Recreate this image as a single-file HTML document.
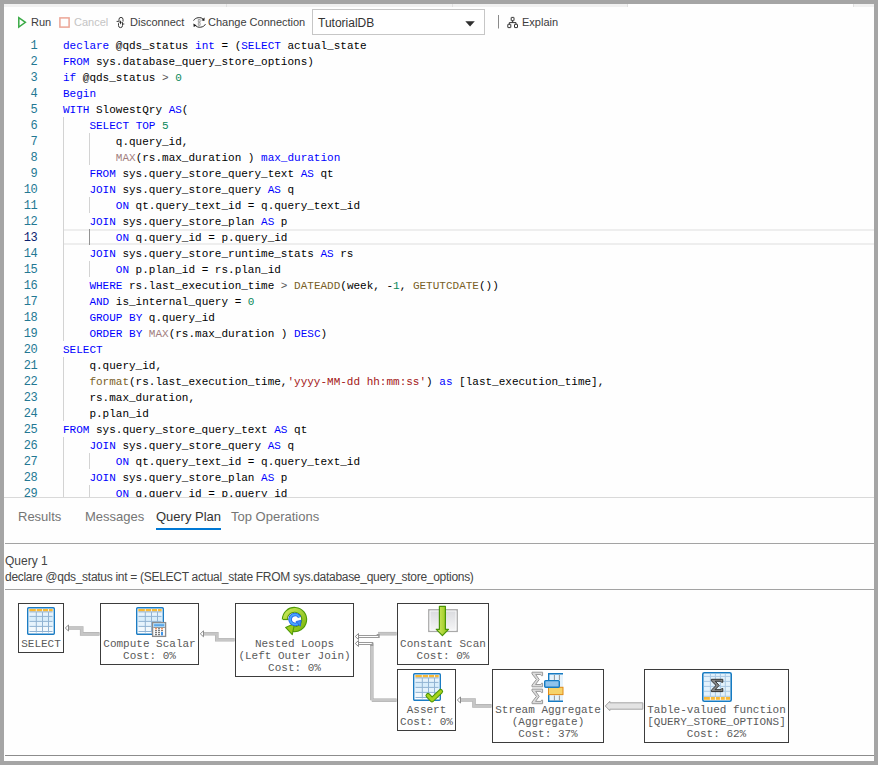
<!DOCTYPE html>
<html><head><meta charset="utf-8">
<style>
*{margin:0;padding:0;box-sizing:border-box}
html,body{width:878px;height:765px;overflow:hidden;background:#a5a5a5}
body{position:relative;font-family:"Liberation Sans",sans-serif}
#win{position:absolute;left:4px;top:4px;width:870px;height:757px;background:#fefefe}
.abs{position:absolute;white-space:pre}
.tb{position:absolute;white-space:pre;font-size:11px;color:#3c3c3c;line-height:14px;top:15px}
.ln{position:absolute;left:0;width:37px;text-align:right;color:#237893;font-family:"Liberation Mono",monospace;font-size:12px;letter-spacing:-0.6px;line-height:16px;padding-top:1px}
.ln.cur{color:#0b216f}
.cl{position:absolute;left:63px;white-space:pre;font-family:"Liberation Mono",monospace;font-size:11px;line-height:16px;color:#000;padding-top:1px}
.k{color:#0000ff}.f{color:#795e26}.m{color:#a27f80}.s{color:#a31515}.n{color:#09885a}.o{color:#555}
.g{position:absolute;width:1px;background:#d3d3d3}
.tab{position:absolute;top:509px;font-size:13px;line-height:16px;color:#757575;white-space:pre}
.hl{position:absolute;height:1px}
.node{position:absolute;border:1px solid #3c3c3c;background:#fff}
.nt{position:absolute;left:0;right:0;text-align:center;font-family:"Liberation Mono",monospace;font-size:11px;line-height:12px;color:#5a5a5a;white-space:pre}
svg{position:absolute;overflow:visible}
</style></head><body>
<div id="win"></div>
<!-- top tab strip remnant -->
<div class="abs" style="left:4px;top:4px;width:624px;height:3px;background:#f1f1f1"></div>
<div class="abs" style="left:853px;top:4px;width:21px;height:3px;background:#f1f1f1"></div>
<div class="abs" style="left:226px;top:4px;width:1px;height:3px;background:#e0e0e0"></div>
<div class="abs" style="left:452px;top:4px;width:1px;height:3px;background:#e0e0e0"></div>
<div class="abs" style="left:627px;top:4px;width:1px;height:3px;background:#e0e0e0"></div>
<div class="abs" style="left:853px;top:4px;width:1px;height:3px;background:#e0e0e0"></div>

<!-- toolbar -->
<svg style="left:0;top:0" width="878" height="40">
  <path d="M18.8 17.6 L18.8 27.1 L25.4 22.35 Z" fill="none" stroke="#3aaa46" stroke-width="1.5" stroke-linejoin="miter"/>
  <rect x="59.9" y="17.9" width="9.2" height="9.2" fill="none" stroke="#eba596" stroke-width="1.5"/>
  <!-- disconnect -->
  <g fill="none" stroke="#3a3a3a" stroke-width="1">
    <path d="M119 22.3 V19.4 A2 2 0 0 1 123 19.4 V21.6"/>
    <path d="M122.5 22.2 V25.6 A2 2 0 0 1 118.5 25.6 V23.2"/>
    <path d="M116.6 21.4 H118.6 M122.6 24 H124.3"/>
  </g>
  <path d="M120.6 20.2 L121.5 22.4 L120.6 24.6 L119.7 22.4Z" fill="#222"/>
  <!-- change connection -->
  <g fill="none" stroke="#2a2a2a" stroke-width="1">
    <path d="M193.6 20.6 C194.8 17.6 201.2 16.2 203.6 19.6"/>
    <path d="M205.4 24.2 C204.2 27.4 197.6 28.6 195.2 25.2"/>
    <path d="M198.3 19.4 h1.8 v2.6 h-1.8 Z M198.3 22.7 h1.8 v2.6 h-1.8 Z" stroke="#8a8a8a" stroke-width="0.8"/>
  </g>
  <path d="M204.6 17.6 L204.4 21 L201.4 20.2 Z" fill="#1e1e1e"/>
  <path d="M193.4 23.6 L193.7 27 L196.7 25.6 Z" fill="#1e1e1e"/>
  <!-- dropdown -->
  <rect x="312.5" y="9.5" width="172" height="25" fill="#fff" stroke="#c6c6c6" stroke-width="1"/>
  <path d="M465.3 21.3 H474.8 L470.05 26.5 Z" fill="#2e2e2e"/>
  <rect x="498" y="15" width="1" height="13.5" fill="#8a8a8a"/>
  <!-- explain -->
  <g fill="none" stroke="#333" stroke-width="1">
    <rect x="511.2" y="17.4" width="2.8" height="3.3" rx="0.3"/>
    <path d="M512.6 20.7 V22.6 M509.3 24.2 V22.6 H516 V24.2"/>
    <rect x="507.8" y="24.3" width="3" height="3.3" rx="0.3"/>
    <rect x="514.5" y="24.3" width="3" height="3.3" rx="0.3"/>
  </g>
</svg>
<div class="tb" style="left:31px">Run</div>
<div class="tb" style="left:74px;color:#c4c4c4">Cancel</div>
<div class="tb" style="left:130px">Disconnect</div>
<div class="tb" style="left:208px">Change Connection</div>
<div class="tb" style="left:318px;top:16px;font-size:12px;color:#333">TutorialDB</div>
<div class="tb" style="left:522px">Explain</div>

<!-- editor -->
<div class="abs" style="left:63px;top:229px;width:811px;height:16px;border-top:2px solid #eeeeee;border-bottom:2px solid #eeeeee"></div>
<div class="abs" style="left:0;top:0;width:878px;height:497px;overflow:hidden"><div class="g" style="left:63px;top:117px;height:16px;background:#d3d3d3"></div>
<div class="g" style="left:63px;top:133px;height:16px;background:#d3d3d3"></div>
<div class="g" style="left:89px;top:133px;height:16px;background:#d3d3d3"></div>
<div class="g" style="left:63px;top:149px;height:16px;background:#d3d3d3"></div>
<div class="g" style="left:89px;top:149px;height:16px;background:#d3d3d3"></div>
<div class="g" style="left:63px;top:165px;height:16px;background:#d3d3d3"></div>
<div class="g" style="left:63px;top:181px;height:16px;background:#d3d3d3"></div>
<div class="g" style="left:63px;top:197px;height:16px;background:#d3d3d3"></div>
<div class="g" style="left:89px;top:197px;height:16px;background:#d3d3d3"></div>
<div class="g" style="left:63px;top:213px;height:16px;background:#d3d3d3"></div>
<div class="g" style="left:63px;top:229px;height:16px;background:#d3d3d3"></div>
<div class="g" style="left:89px;top:229px;height:16px;background:#939393"></div>
<div class="g" style="left:63px;top:245px;height:16px;background:#d3d3d3"></div>
<div class="g" style="left:63px;top:261px;height:16px;background:#d3d3d3"></div>
<div class="g" style="left:89px;top:261px;height:16px;background:#d3d3d3"></div>
<div class="g" style="left:63px;top:277px;height:16px;background:#d3d3d3"></div>
<div class="g" style="left:63px;top:293px;height:16px;background:#d3d3d3"></div>
<div class="g" style="left:63px;top:309px;height:16px;background:#d3d3d3"></div>
<div class="g" style="left:63px;top:325px;height:16px;background:#d3d3d3"></div>
<div class="g" style="left:63px;top:357px;height:16px;background:#d3d3d3"></div>
<div class="g" style="left:63px;top:373px;height:16px;background:#d3d3d3"></div>
<div class="g" style="left:63px;top:389px;height:16px;background:#d3d3d3"></div>
<div class="g" style="left:63px;top:405px;height:16px;background:#d3d3d3"></div>
<div class="g" style="left:63px;top:437px;height:16px;background:#d3d3d3"></div>
<div class="g" style="left:63px;top:453px;height:16px;background:#d3d3d3"></div>
<div class="g" style="left:89px;top:453px;height:16px;background:#d3d3d3"></div>
<div class="g" style="left:63px;top:469px;height:16px;background:#d3d3d3"></div>
<div class="g" style="left:63px;top:485px;height:16px;background:#d3d3d3"></div>
<div class="g" style="left:89px;top:485px;height:16px;background:#d3d3d3"></div>
<div class="ln" style="top:37px">1</div>
<div class="cl" style="top:37px"><span class="k">declare</span> @qds_status <span class="k">int</span> = (<span class="k">SELECT</span> actual_state</div>
<div class="ln" style="top:53px">2</div>
<div class="cl" style="top:53px"><span class="k">FROM</span> sys.database_query_store_options)</div>
<div class="ln" style="top:69px">3</div>
<div class="cl" style="top:69px"><span class="k">if</span> @qds_status <span class="o">&gt;</span> <span class="n">0</span></div>
<div class="ln" style="top:85px">4</div>
<div class="cl" style="top:85px"><span class="k">Begin</span></div>
<div class="ln" style="top:101px">5</div>
<div class="cl" style="top:101px"><span class="k">WITH</span> SlowestQry <span class="k">AS</span>(</div>
<div class="ln" style="top:117px">6</div>
<div class="cl" style="top:117px">    <span class="k">SELECT</span> <span class="k">TOP</span> <span class="n">5</span></div>
<div class="ln" style="top:133px">7</div>
<div class="cl" style="top:133px">        q.query_id,</div>
<div class="ln" style="top:149px">8</div>
<div class="cl" style="top:149px">        <span class="m">MAX</span>(rs.max_duration ) <span class="k">max_duration</span></div>
<div class="ln" style="top:165px">9</div>
<div class="cl" style="top:165px">    <span class="k">FROM</span> sys.query_store_query_text <span class="k">AS</span> qt</div>
<div class="ln" style="top:181px">10</div>
<div class="cl" style="top:181px">    <span class="k">JOIN</span> sys.query_store_query <span class="k">AS</span> q</div>
<div class="ln" style="top:197px">11</div>
<div class="cl" style="top:197px">        <span class="k">ON</span> qt.query_text_id = q.query_text_id</div>
<div class="ln" style="top:213px">12</div>
<div class="cl" style="top:213px">    <span class="k">JOIN</span> sys.query_store_plan <span class="k">AS</span> p</div>
<div class="ln cur" style="top:229px">13</div>
<div class="cl" style="top:229px">        <span class="k">ON</span> q.query_id = p.query_id</div>
<div class="ln" style="top:245px">14</div>
<div class="cl" style="top:245px">    <span class="k">JOIN</span> sys.query_store_runtime_stats <span class="k">AS</span> rs</div>
<div class="ln" style="top:261px">15</div>
<div class="cl" style="top:261px">        <span class="k">ON</span> p.plan_id = rs.plan_id</div>
<div class="ln" style="top:277px">16</div>
<div class="cl" style="top:277px">    <span class="k">WHERE</span> rs.last_execution_time <span class="o">&gt;</span> <span class="f">DATEADD</span>(week, -<span class="n">1</span>, <span class="f">GETUTCDATE</span>())</div>
<div class="ln" style="top:293px">17</div>
<div class="cl" style="top:293px">    <span class="k">AND</span> is_internal_query = <span class="n">0</span></div>
<div class="ln" style="top:309px">18</div>
<div class="cl" style="top:309px">    <span class="k">GROUP</span> <span class="k">BY</span> q.query_id</div>
<div class="ln" style="top:325px">19</div>
<div class="cl" style="top:325px">    <span class="k">ORDER</span> <span class="k">BY</span> <span class="m">MAX</span>(rs.max_duration ) <span class="k">DESC</span>)</div>
<div class="ln" style="top:341px">20</div>
<div class="cl" style="top:341px"><span class="k">SELECT</span></div>
<div class="ln" style="top:357px">21</div>
<div class="cl" style="top:357px">    q.query_id,</div>
<div class="ln" style="top:373px">22</div>
<div class="cl" style="top:373px">    <span class="f">format</span>(rs.last_execution_time,<span class="s">&#x27;yyyy-MM-dd hh:mm:ss&#x27;</span>) <span class="k">as</span> [last_execution_time],</div>
<div class="ln" style="top:389px">23</div>
<div class="cl" style="top:389px">    rs.max_duration,</div>
<div class="ln" style="top:405px">24</div>
<div class="cl" style="top:405px">    p.plan_id</div>
<div class="ln" style="top:421px">25</div>
<div class="cl" style="top:421px"><span class="k">FROM</span> sys.query_store_query_text <span class="k">AS</span> qt</div>
<div class="ln" style="top:437px">26</div>
<div class="cl" style="top:437px">    <span class="k">JOIN</span> sys.query_store_query <span class="k">AS</span> q</div>
<div class="ln" style="top:453px">27</div>
<div class="cl" style="top:453px">        <span class="k">ON</span> qt.query_text_id = q.query_text_id</div>
<div class="ln" style="top:469px">28</div>
<div class="cl" style="top:469px">    <span class="k">JOIN</span> sys.query_store_plan <span class="k">AS</span> p</div>
<div class="ln" style="top:485px">29</div>
<div class="cl" style="top:485px">        <span class="k">ON</span> q.query_id = p.query_id</div></div>
<div class="abs" style="left:4px;top:497px;width:870px;height:1px;background:#d9d9d9"></div>

<!-- results tabs -->
<div class="tab" style="left:18px">Results</div>
<div class="tab" style="left:85px">Messages</div>
<div class="tab" style="left:156px;color:#333">Query Plan</div>
<div class="tab" style="left:231px">Top Operations</div>
<div class="abs" style="left:156px;top:528px;width:65px;height:2px;background:#0078d4"></div>
<div class="abs" style="left:5px;top:543px;width:869px;height:1px;background:#a3a3a3"></div>
<div class="abs" style="left:5px;top:554px;font-size:12px;line-height:14px;color:#444">Query 1</div>
<div class="abs" style="left:5px;top:570px;font-size:12px;line-height:14px;color:#444;letter-spacing:-0.29px">declare @qds_status int = (SELECT actual_state FROM sys.database_query_store_options)</div>
<div class="abs" style="left:5px;top:589px;width:869px;height:1px;background:#a3a3a3"></div>
<div class="abs" style="left:5px;top:755px;width:869px;height:1px;background:#8c8c8c"></div>

<!-- plan nodes -->
<div class="node" style="left:18px;top:603px;width:46px;height:50px"><div class="nt" style="top:34px">SELECT</div></div>
<div class="node" style="left:100px;top:603px;width:99px;height:62px"><div class="nt" style="top:34px">Compute Scalar
Cost: 0%</div></div>
<div class="node" style="left:235px;top:603px;width:119px;height:74px"><div class="nt" style="top:34px">Nested Loops
(Left Outer Join)
Cost: 0%</div></div>
<div class="node" style="left:397px;top:603px;width:92px;height:62px"><div class="nt" style="top:34px">Constant Scan
Cost: 0%</div></div>
<div class="node" style="left:397px;top:669px;width:59px;height:62px"><div class="nt" style="top:34px">Assert
Cost: 0%</div></div>
<div class="node" style="left:492px;top:669px;width:112px;height:74px"><div class="nt" style="top:34px">Stream Aggregate
(Aggregate)
Cost: 37%</div></div>
<div class="node" style="left:644px;top:669px;width:145px;height:74px"><div class="nt" style="top:34px">Table-valued function
[QUERY_STORE_OPTIONS]
Cost: 62%</div></div>

<svg style="left:0;top:0" width="878" height="765">
 <defs>
  <g id="tbl">
   <rect x="0.7" y="0.7" width="26.6" height="26.6" rx="1" fill="#fff" stroke="#1b7cc3" stroke-width="1.4"/>
   <rect x="2" y="4.5" width="24" height="20" fill="#e6f3fc"/>
   <rect x="2" y="9.5" width="24" height="5" fill="#d9eefb"/>
   <rect x="2" y="19.5" width="24" height="5" fill="#f3f9fd"/>
   <rect x="2.3" y="2" width="23.4" height="2.4" fill="#f8b936"/>
   <g stroke="#91b3d3" stroke-width="1">
    <path d="M2.5 4.9 H25.5 M2.5 9.4 H25.5 M2.5 14.4 H25.5 M2.5 19.4 H25.5 M2.5 24.5 H25.5"/>
    <path d="M9.3 4.4 V25.5 M15.5 4.4 V25.5 M21.5 4.4 V25.5"/>
   </g>
   <g stroke="#fff" stroke-width="0.8">
    <path d="M9.3 2 V4.4 M15.5 2 V4.4 M21.5 2 V4.4"/>
   </g>
  </g>
  <linearGradient id="gArc" x1="0" y1="0" x2="1" y2="1">
   <stop offset="0" stop-color="#c9e85a"/><stop offset="1" stop-color="#7db80e"/>
  </linearGradient>
  <linearGradient id="gArr" x1="0" y1="0" x2="1" y2="0">
   <stop offset="0" stop-color="#d9ef6a"/><stop offset="1" stop-color="#8cc012"/>
  </linearGradient>
  <linearGradient id="gBox" x1="0" y1="0" x2="0" y2="1">
   <stop offset="0" stop-color="#d9dade"/><stop offset="1" stop-color="#f6f6f7"/>
  </linearGradient>
 </defs>

 <!-- SELECT icon -->
 <use href="#tbl" x="27" y="607"/>
 <!-- Compute scalar -->
 <use href="#tbl" x="136" y="607"/>
 <g>
  <rect x="152.6" y="622.6" width="13" height="13.8" fill="#fbfbfb" stroke="#8c8c8c" stroke-width="1.3"/>
  <rect x="153.5" y="623.4" width="11.2" height="3.4" fill="#8dcaf6"/>
  <rect x="154.2" y="624.6" width="9.8" height="1" fill="#3d8fdc"/>
  <rect x="153.3" y="627" width="11.6" height="0.9" fill="#8c8c8c"/>
  <g fill="#5a5a5a">
   <rect x="155" y="630.2" width="2" height="1"/><rect x="158" y="630.2" width="2" height="1"/><rect x="161" y="630.2" width="2" height="1"/>
   <rect x="155" y="632.2" width="2" height="1"/><rect x="158" y="632.2" width="2" height="1"/>
   <rect x="155" y="634.2" width="2" height="1"/><rect x="158" y="634.2" width="2" height="1"/>
  </g>
  <rect x="155" y="628.3" width="2" height="1" fill="#f06a1e"/><rect x="158" y="628.3" width="2" height="1" fill="#5a5a5a"/><rect x="161" y="628.3" width="2" height="1" fill="#f06a1e"/>
  <rect x="161" y="632" width="2" height="3.4" fill="#3f95ea"/>
 </g>
 <!-- Nested loops icon -->
 <g>
  <path d="M284.8 619.5 A9.7 9.7 0 1 1 292 628.9" fill="none" stroke="#4f9a08" stroke-width="6"/>
  <path d="M284.8 619.5 A9.7 9.7 0 1 1 292 628.9" fill="none" stroke="url(#gArc)" stroke-width="3.8"/>
  <path d="M283 619.5 H288.5" stroke="#4f9a08" stroke-width="1.2"/>
  <path d="M294.6 623.4 L292.3 634.6 L285.6 627.4 Z" fill="#9ccb1a" stroke="#4f9a08" stroke-width="1.1" stroke-linejoin="round"/>
  <path d="M299.6 617.3 A5 5 0 1 0 298.8 622.8" fill="none" stroke="#1f5ee8" stroke-width="3.6"/>
  <path d="M299.6 617.3 A5 5 0 1 0 298.8 622.8" fill="none" stroke="#4aa8ff" stroke-width="2"/>
  <path d="M296 621.5 L301.2 620.3 L300.3 626.2 Z" fill="#3f8ff5" stroke="#1f5ee8" stroke-width="0.8"/>
 </g>
 <!-- Constant scan icon -->
 <g>
  <rect x="428.8" y="609.8" width="28.4" height="21.6" fill="url(#gBox)" stroke="#a9a9a9" stroke-width="1.4"/>
  <rect x="430" y="611" width="26" height="19.2" fill="none" stroke="#fff" stroke-width="0.8"/>
  <path d="M439.4 606.4 H445.4 V629.3 H448.5 L442.4 635.6 L436.3 629.3 H439.4 Z" fill="url(#gArr)" stroke="#4a9406" stroke-width="1.2" stroke-linejoin="round"/>
 </g>
 <!-- Assert icon -->
 <use href="#tbl" x="413" y="673"/>
 <path d="M428 695.5 L432 699.8 L440.6 691.5" fill="none" stroke="#4b9407" stroke-width="5" stroke-linejoin="round" stroke-linecap="round"/>
 <path d="M428 695.5 L432 699.8 L440.6 691.5" fill="none" stroke="#a5d31c" stroke-width="3" stroke-linejoin="round" stroke-linecap="round"/>
 <!-- Stream aggregate icon -->
 <g>
  <path d="M532.00 672.20 L542.60 672.20 L542.60 675.70 L541.40 675.70 L540.70 674.50 L535.70 674.50 L539.20 679.50 L535.50 684.50 L540.90 684.50 L541.60 683.20 L542.60 683.20 L542.60 686.80 L532.00 686.80 L532.00 685.10 L536.40 679.50 L532.00 673.90 Z" fill="#dcdcdc" stroke="#9a9a9a" stroke-width="1"/>
  <path d="M532.00 689.10 L542.60 689.10 L542.60 692.60 L541.40 692.60 L540.70 691.40 L535.70 691.40 L539.20 696.40 L535.50 701.40 L540.90 701.40 L541.60 700.10 L542.60 700.10 L542.60 703.70 L532.00 703.70 L532.00 702.00 L536.40 696.40 L532.00 690.80 Z" fill="#dcdcdc" stroke="#9a9a9a" stroke-width="1"/>
  <rect x="549" y="674" width="14" height="27" fill="#e6f3fc"/>
  <path d="M563 673.7 H548.7 V701.3 H563" fill="none" stroke="#167bc2" stroke-width="1.4"/>
  <g stroke="#8a8a8a" stroke-width="0.9"><path d="M554.4 675 V680 M559.4 675 V680 M554.4 695.5 V700.5 M559.4 695.5 V700.5"/></g>
  <rect x="548.5" y="687.3" width="14.5" height="7.3" fill="#f6d36a" stroke="#e08b1a" stroke-width="1"/>
  <rect x="544.7" y="680.6" width="14.6" height="6.6" rx="1" fill="#8fc3ec" stroke="#167bc2" stroke-width="1.4"/>
 </g>
 <!-- TVF icon -->
 <g>
  <rect x="702.8" y="672.8" width="28.4" height="28.4" rx="1.5" fill="#fff" stroke="#167bc2" stroke-width="1.6"/>
  <rect x="704" y="674" width="26" height="22.5" fill="#e3f2fc"/>
  <g stroke="#a9c8e3" stroke-width="1"><path d="M704 676.4 H730 M704 681.4 H730 M704 686.4 H730 M704 691.3 H730 M704 696.3 H730 M710.4 674 V700 M715.4 674 V700 M720.4 674 V700 M725.3 674 V700"/></g>
  <rect x="704" y="697" width="26" height="2.8" fill="#f8b936"/>
  <g stroke="#fff" stroke-width="0.9"><path d="M710.4 697 V700 M715.4 697 V700 M720.4 697 V700 M725.3 697 V700"/></g>
  <path d="M711.30 679.30 L722.80 679.30 L722.80 682.25 L721.50 682.25 L720.74 681.24 L715.31 681.24 L719.11 685.45 L715.10 689.66 L720.96 689.66 L721.72 688.57 L722.80 688.57 L722.80 691.60 L711.30 691.60 L711.30 690.17 L716.07 685.45 L711.30 680.73 Z" fill="#8a8a8a" stroke="#333" stroke-width="1"/>
 </g>

 <!-- connectors -->
 <g fill="none" stroke-linejoin="miter">
  <g stroke="#b2b2b2" stroke-width="3.6">
   <path d="M68 628 H81.7 V633.9 H99.5"/>
   <path d="M203.5 633.8 H216.8 V639.8 H234.5"/>
   <path d="M460.5 700 H474 V705.9 H491.5"/>
   <path d="M378 633.7 H396.5"/>
   <path d="M371.8 700.2 H396.5"/>
   <path d="M371.8 643.3 V700.2"/>
  </g>
  <g stroke="#c6c6c6" stroke-width="2.4">
   <path d="M68 628 H81.7 V633.9 H99.5"/>
   <path d="M203.5 633.8 H216.8 V639.8 H234.5"/>
   <path d="M460.5 700 H474 V705.9 H491.5"/>
   <path d="M378 633.7 H396.5"/>
   <path d="M371.8 700.2 H396.5"/>
   <path d="M371.8 644.5 V700.2"/>
  </g>
  <!-- outlined segments -->
  <path d="M357 636.5 H378.2 V634" stroke="#9a9a9a" stroke-width="3"/>
  <path d="M357 636.5 H378.2" stroke="#fff" stroke-width="1"/>
  <path d="M357 643.5 H371.75 V646" stroke="#9a9a9a" stroke-width="3"/>
  <path d="M357 643.5 H371.75" stroke="#fff" stroke-width="1"/>
 </g>
 <!-- arrowheads -->
 <g fill="#fff" stroke="#8c8c8c" stroke-width="1">
  <path d="M65.3 628 L68.5 625 L68.5 631 Z"/>
  <path d="M200.3 633.8 L203.5 630.8 L203.5 636.8 Z"/>
  <path d="M457.3 700 L460.5 697 L460.5 703 Z"/>
  <path d="M355.3 636.5 L358.5 633.5 L358.5 639.5 Z"/>
  <path d="M355.3 643.5 L358.5 640.5 L358.5 646.5 Z"/>
 </g>
 <path d="M605.3 706 L609.8 701.3 V702.8 H642.8 V709.2 H609.8 V710.7 Z" fill="#e3e3e3" stroke="#a4a4a4" stroke-width="1"/>
</svg>

</body></html>
